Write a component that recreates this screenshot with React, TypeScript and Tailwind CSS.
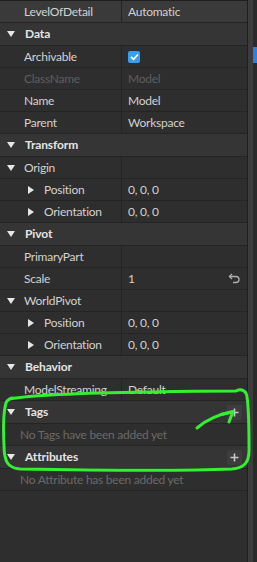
import React from "react";

const Tri = ({ open }: { open: boolean }) =>
  open ? (
    <svg width="8" height="6" viewBox="0 0 8 6" className="shrink-0">
      <path d="M0 0 H8 L4 6 Z" fill="#e6e6e6" />
    </svg>
  ) : (
    <svg width="6" height="8" viewBox="0 0 6 8" className="shrink-0">
      <path d="M0 0 V8 L6 4 Z" fill="#e6e6e6" />
    </svg>
  );

const Header = ({ label, plus }: { label: string; plus?: boolean }) => (
  <div className="h-[23px] flex items-center bg-[#353535] border-b border-[#242424] pl-[7px] pr-[5px]">
    <Tri open />
    <span className="ml-[10px] font-bold text-[#e4e4e4] text-[12px] tracking-[-0.1px]">{label}</span>
    {plus && (
      <div className="ml-auto w-[15px] h-[15px] bg-[#3d3d3d] rounded-[2px] flex items-center justify-center">
        <svg width="9" height="9" viewBox="0 0 9 9">
          <path d="M4.5 0.5 V8.5 M0.5 4.5 H8.5" stroke="#c8c8c8" strokeWidth="1.6" />
        </svg>
      </div>
    )}
  </div>
);

type RowProps = {
  name: string;
  value?: React.ReactNode;
  indent?: 0 | 1;
  tri?: "open" | "closed";
  dim?: boolean;
  hl?: boolean;
  extra?: React.ReactNode;
};

const Row = ({ name, value, indent = 0, tri, dim, hl, extra }: RowProps) => (
  <div
    className={`h-[22px] flex border-b border-[#242424] ${hl ? "bg-[#3a3a3a]" : "bg-[#2e2e2e]"}`}
  >
    <div className="w-[122px] shrink-0 border-r border-[#242424] flex items-center overflow-hidden">
      {indent === 1 ? (
        <div className="pl-[28px] flex items-center">
          <Tri open={false} />
          <span className="ml-[10px] text-[#d2d2d2] whitespace-nowrap">{name}</span>
        </div>
      ) : tri === "open" ? (
        <div className="pl-[7px] flex items-center">
          <Tri open />
          <span className="ml-[9px] text-[#d2d2d2] whitespace-nowrap">{name}</span>
        </div>
      ) : (
        <span
          className={`pl-[24px] pr-[4px] min-w-0 whitespace-nowrap overflow-hidden text-ellipsis ${dim ? "text-[#5e5e5e]" : "text-[#d2d2d2]"}`}
        >
          {name}
        </span>
      )}
    </div>
    <div className="flex-1 flex items-center pl-[6px] pr-[7px]">
      <span className={`${dim ? "text-[#5e5e5e]" : "text-[#d2d2d2]"} whitespace-nowrap`}>{value}</span>
      {extra && <div className="ml-auto flex items-center">{extra}</div>}
    </div>
  </div>
);

const Note = ({ text }: { text: string }) => (
  <div className="h-[22px] flex items-center border-b border-[#242424] pl-[20px] text-[#6a6a6a]">{text}</div>
);

export default function App() {
  return (
    <div
      className="w-[257px] h-[562px] bg-[#2e2e2e] relative flex overflow-hidden text-[12px] tracking-[-0.25px]"
      style={{ fontFamily: "Lato, 'Noto Sans', sans-serif" }}
    >
      <div className="w-[247px] flex flex-col border-t border-[#1e1e1e]">
        <Row name="LevelOfDetail" value="Automatic" hl />
        <Header label="Data" />
        <Row
          name="Archivable"
          value={
            <div className="w-[12px] h-[12px] rounded-[2px] bg-[#3a9ef0] flex items-center justify-center">
              <svg width="9" height="8" viewBox="0 0 9 8">
                <path d="M1 4 L3.5 6.3 L8 1.5" stroke="#fff" strokeWidth="1.7" fill="none" />
              </svg>
            </div>
          }
        />
        <Row name="ClassName" value="Model" dim />
        <Row name="Name" value="Model" />
        <Row name="Parent" value="Workspace" />
        <Header label="Transform" />
        <Row name="Origin" tri="open" />
        <Row name="Position" value="0, 0, 0" indent={1} />
        <Row name="Orientation" value="0, 0, 0" indent={1} />
        <Header label="Pivot" />
        <Row name="PrimaryPart" />
        <Row
          name="Scale"
          value="1"
          extra={
            <svg width="12" height="11" viewBox="0 0 12 11" fill="none">
              <path d="M4 1 L1.5 3.5 L4 6" stroke="#b0b0b0" strokeWidth="1.3" />
              <path d="M1.5 3.5 H8 A3 3 0 0 1 8 9.5 H5" stroke="#b0b0b0" strokeWidth="1.3" />
            </svg>
          }
        />
        <Row name="WorldPivot" tri="open" />
        <Row name="Position" value="0, 0, 0" indent={1} />
        <Row name="Orientation" value="0, 0, 0" indent={1} />
        <Header label="Behavior" />
        <Row name="ModelStreamingMode" value="Default" />
        <Header label="Tags" plus />
        <Note text="No Tags have been added yet" />
        <Header label="Attributes" plus />
        <Note text="No Attribute has been added yet" />
      </div>
      <div className="w-[1px] bg-[#1e1e1e]" />
      <div className="w-[5px] bg-[#3c3c3c]" />
      <div className="w-[4px] bg-[#2a2a2a] flex flex-col">
        <div className="h-[47px]" />
        <div className="h-[16px] bg-[#2f7fe0]" />
      </div>
      <svg
        className="absolute left-0 top-0 pointer-events-none"
        width="257"
        height="562"
        viewBox="0 0 257 562"
        fill="none"
      >
        <path
          d="M10 399 C 30 395, 80 393, 150 392 C 200 391, 225 391, 236 391 C 240 389, 243 389, 246 393 C 249 400, 249 430, 249 450 C 249 462, 245 468, 232 469 C 180 471, 80 470, 20 469 C 8 468, 4 462, 4 445 C 3 425, 4 410, 6 403 C 7 400, 9 399, 12 398"
          stroke="#33f033"
          strokeWidth="3"
          strokeLinecap="round"
        />
        <path
          d="M197 428 C 205 421, 215 415, 232 412"
          stroke="#33f033"
          strokeWidth="3"
          strokeLinecap="round"
        />
        <path d="M221 414.5 L233 411.5 L229 422" stroke="#33f033" strokeWidth="3" strokeLinecap="round" strokeLinejoin="round" />
      </svg>
    </div>
  );
}
